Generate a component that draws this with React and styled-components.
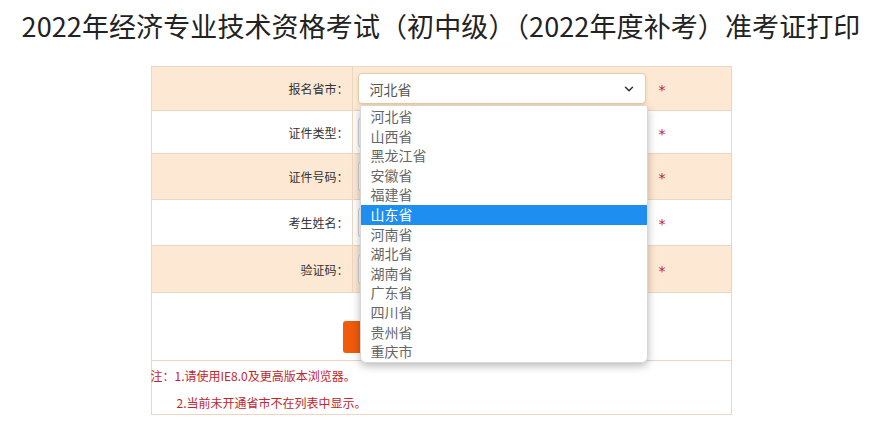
import React from "react";
import styled, { createGlobalStyle } from "styled-components";
import { ChevronDown } from "lucide-react";

const Global = createGlobalStyle`
  html, body { margin: 0; padding: 0; background: #fff; }
  body { font-family: "Noto Sans CJK SC", "Noto Sans", sans-serif; }
`;

const Page = styled.div`
  display: flex;
  flex-direction: column;
  align-items: center;
  padding-left: 3px;
`;

const Title = styled.h1`
  margin: 6px 0 0;
  font-size: 27px;
  line-height: 39px;
  font-weight: 400;
  color: #222;
  letter-spacing: 0.1px;
  white-space: nowrap;
`;

const Frame = styled.div`
  margin-top: 21px;
  width: 579px;
  border: 1px solid #ecd6c2;
  font-size: 12px;
  color: #333;
`;

const Row = styled.div`
  display: grid;
  grid-template-columns: 201px 1fr;
  height: ${(p) => p.$h}px;
  background: ${(p) => (p.$tint ? "#fde8d3" : "#fff")};
  border-bottom: 1px solid #ecd6c2;
`;

const Label = styled.div`
  display: flex;
  align-items: center;
  justify-content: flex-end;
  padding-right: 3px;
  border-right: 1px solid #ecd6c2;
`;

const Field = styled.div`
  position: relative;
  display: flex;
  align-items: center;
  padding-left: 5px;
`;

const SelectBox = styled.div`
  position: relative;
  box-sizing: border-box;
  width: 288px;
  height: 31px;
  display: flex;
  align-items: center;
  justify-content: space-between;
  padding: 0 9px 0 11px;
  background: #fff;
  border: 1px solid ${(p) => (p.$focus ? "#e2cfa8" : "#cfcfcf")};
  border-radius: 4px;
  box-shadow: ${(p) => (p.$focus ? "0 1px 3px rgba(160,130,80,0.25)" : "none")};
  font-size: 14px;
  color: #555;
`;

const Star = styled.span`
  margin-left: 13px;
  margin-top: 3px;
  color: #c0272d;
  font-size: 14px;
  font-family: "DejaVu Sans", sans-serif;
`;

const List = styled.ul`
  position: absolute;
  z-index: 5;
  top: 39px;
  left: 7px;
  width: 286px;
  margin: 0;
  padding: 1px 0 0;
  list-style: none;
  background: #fff;
  border: 1px solid #d8d8d8;
  border-top: none;
  border-radius: 0 0 6px 6px;
  box-shadow: 0 3px 8px rgba(0, 0, 0, 0.28);
  overflow: hidden;
`;

const Item = styled.li`
  height: 19.6px;
  line-height: 19.6px;
  padding-left: 10px;
  font-size: 14px;
  color: ${(p) => (p.$active ? "#fff" : "#666")};
  background: ${(p) => (p.$active ? "#1e8ef0" : "transparent")};
`;

const ButtonRow = styled.div`
  height: 68px;
  border-bottom: 1px solid #ecd6c2;
  padding-left: 191px;
  padding-top: 28px;
  box-sizing: border-box;
`;

const PrintButton = styled.button`
  width: 196px;
  height: 32px;
  border: none;
  border-radius: 3px;
  background: #ef5a0b;
`;

const Notes = styled.div`
  height: 53px;
  padding-top: 1px;
  box-sizing: border-box;
  color: #c0272d;
  font-size: 12px;
  line-height: 27px;
  margin-left: -1px;
`;

const NoteLine = styled.div`
  padding-left: ${(p) => p.$indent}px;
  white-space: nowrap;
`;

const provinces = [
  "河北省", "山西省", "黑龙江省", "安徽省", "福建省", "山东省", "河南省",
  "湖北省", "湖南省", "广东省", "四川省", "贵州省", "重庆市",
];

const rows = [
  { label: "报名省市：", h: 43, tint: true },
  { label: "证件类型：", h: 42, tint: false },
  { label: "证件号码：", h: 45, tint: true },
  { label: "考生姓名：", h: 45, tint: false },
  { label: "验证码：", h: 46, tint: true },
];

export default function App() {
  return (
    <>
      <Global />
      <Page>
        <Title>2022年经济专业技术资格考试（初中级）（2022年度补考）准考证打印</Title>
        <Frame>
          {rows.map((r, i) => (
            <Row key={r.label} $h={r.h} $tint={r.tint}>
              <Label>{r.label}</Label>
              <Field>
                <SelectBox $focus={i === 0}>
                  {i === 0 ? "河北省" : ""}
                  {i < 2 && <ChevronDown size={14} strokeWidth={2.6} color="#333" />}
                </SelectBox>
                <Star>*</Star>
                {i === 0 && (
                  <List>
                    {provinces.map((p) => (
                      <Item key={p} $active={p === "山东省"}>{p}</Item>
                    ))}
                  </List>
                )}
              </Field>
            </Row>
          ))}
          <ButtonRow>
            <PrintButton aria-label="打印准考证" />
          </ButtonRow>
          <Notes>
            <NoteLine $indent={0}>注：1.请使用IE8.0及更高版本浏览器。</NoteLine>
            <NoteLine $indent={26}>2.当前未开通省市不在列表中显示。</NoteLine>
          </Notes>
        </Frame>
      </Page>
    </>
  );
}
